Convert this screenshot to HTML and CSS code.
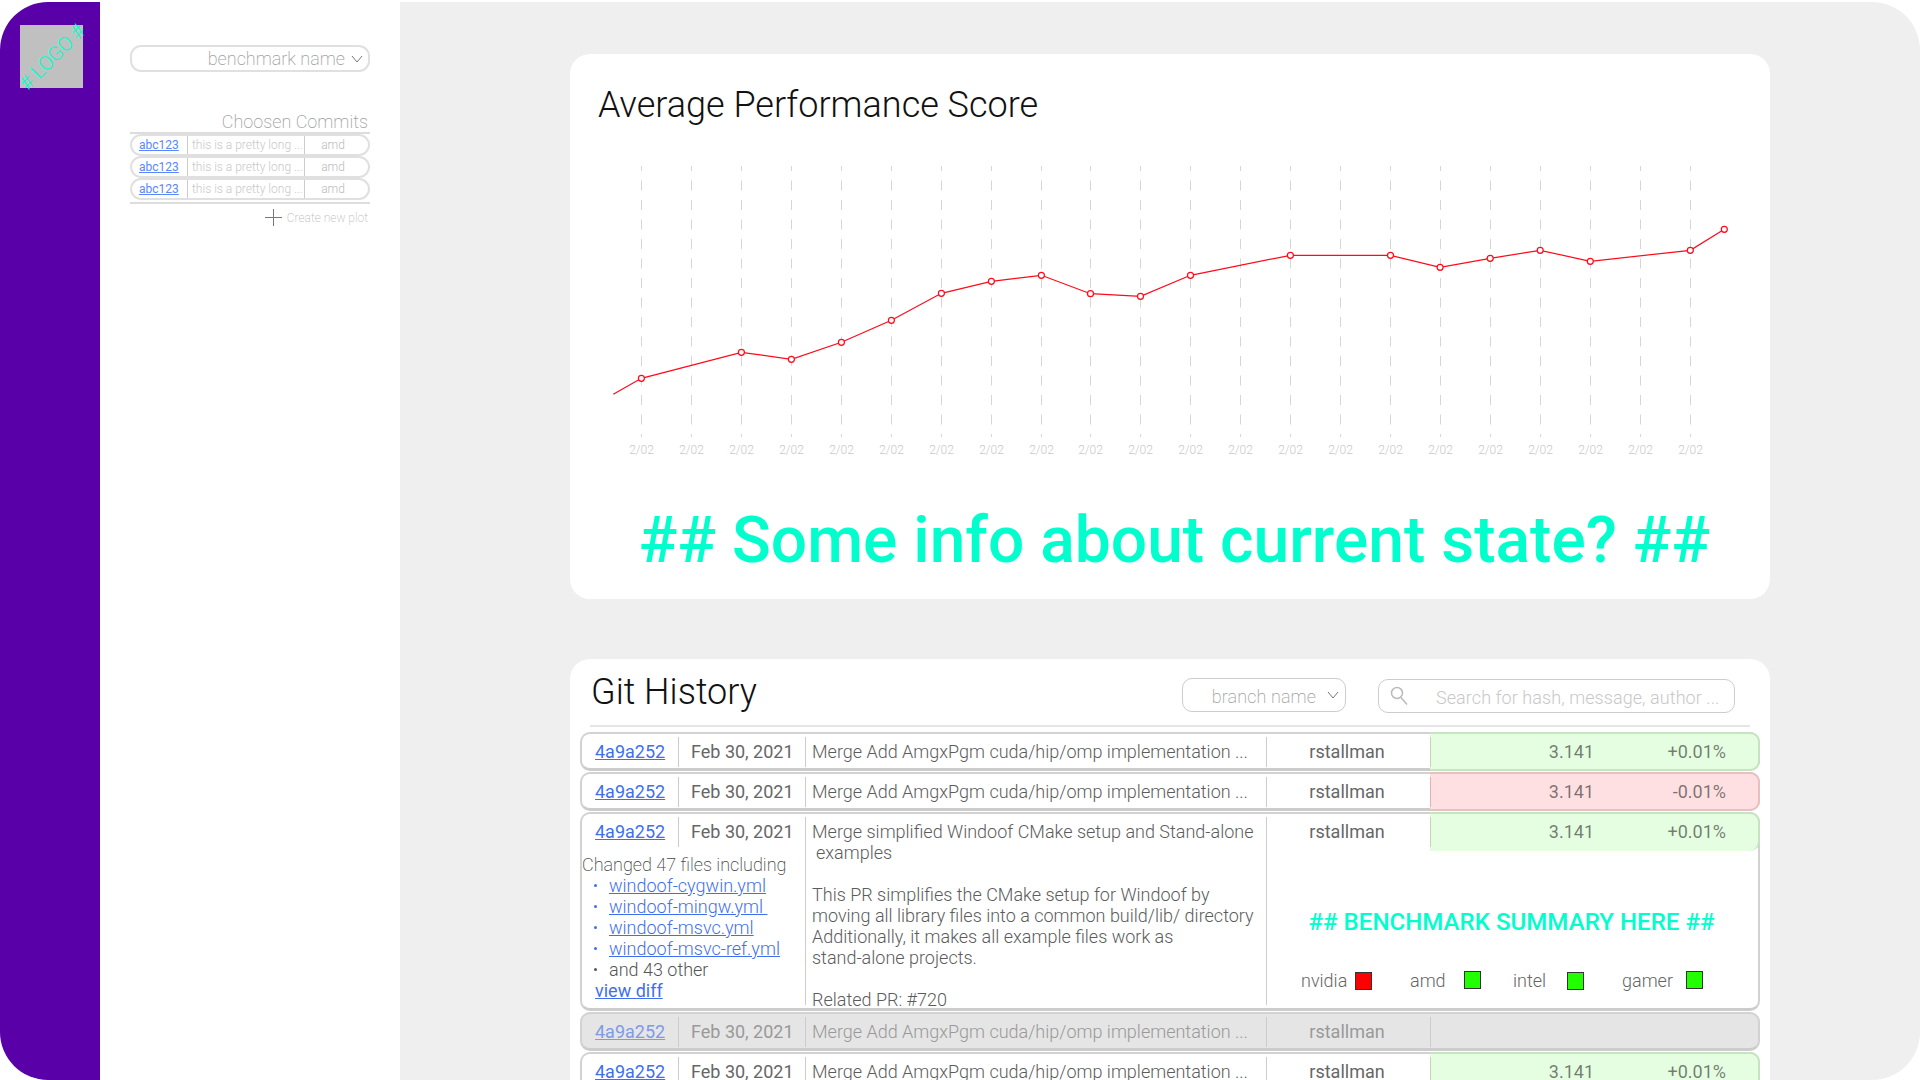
FILE: index.html
```html
<!DOCTYPE html>
<html lang="en">
<head>
<meta charset="utf-8">
<title>Benchmarks</title>
<link rel="stylesheet" href="styles.css">
</head>
<body>
<div class="app">
  <nav class="rail">
    <div class="logo"><span class="logo-text"># LOGO #</span></div>
  </nav>
  <aside class="panel">
    <div class="select select-bench">
      <span>benchmark name</span>
      <svg class="chev" width="12" height="8" viewBox="0 0 12 8"><path d="M1 1l5 6 5-6"/></svg>
    </div>
    <div class="chosen-title">Choosen Commits</div>
    <div class="chosen-list">
      <div class="chosen"><a href="#" class="chosen-hash">abc123</a><span class="chosen-msg">this is a pretty long ...</span><span class="chosen-tag">amd</span></div>
      <div class="chosen"><a href="#" class="chosen-hash">abc123</a><span class="chosen-msg">this is a pretty long ...</span><span class="chosen-tag">amd</span></div>
      <div class="chosen"><a href="#" class="chosen-hash">abc123</a><span class="chosen-msg">this is a pretty long ...</span><span class="chosen-tag">amd</span></div>
    </div>
    <div class="new-plot">
      <svg class="plus" width="17" height="17" viewBox="0 0 17 17"><path d="M8.5 0v17M0 8.5h17"/></svg>
      <span>Create new plot</span>
    </div>
  </aside>
  <main class="main">
    <section class="card card-chart">
      <h2 class="card-title chart-title">Average Performance Score</h2>
      <svg class="chart" width="1200" height="320" viewBox="0 0 1200 320">
        <path class="grid" d="M71.5 16V287M121.5 16V287M171.5 16V287M221.5 16V287M271.5 16V287M321.5 16V287M371.5 16V287M421.5 16V287M471.5 16V287M520.5 16V287M570.5 16V287M620.5 16V287M670.5 16V287M720.5 16V287M770.5 16V287M820.5 16V287M870.5 16V287M920.5 16V287M970.5 16V287M1020.5 16V287M1070.5 16V287M1120.5 16V287"/>
        <polyline class="line" points="43.3,244.3 71.4,228.3 171.4,202.3 221.4,209.3 271.4,192.3 321.4,170.3 371.4,143.3 421.4,131.3 471.4,125.3 520.5,143.7 570.5,146.3 620.5,125.3 720.4,105.3 820.5,105.3 870.1,117.3 920.2,108.3 970.2,100.3 1020.3,111.3 1120.3,100.3 1154.3,79.3"/>
        <g class="dots">
          <circle cx="71.4" cy="228.3" r="3"/><circle cx="171.4" cy="202.3" r="3"/><circle cx="221.4" cy="209.3" r="3"/><circle cx="271.4" cy="192.3" r="3"/><circle cx="321.4" cy="170.3" r="3"/><circle cx="371.4" cy="143.3" r="3"/><circle cx="421.4" cy="131.3" r="3"/><circle cx="471.4" cy="125.3" r="3"/><circle cx="520.5" cy="143.7" r="3"/><circle cx="570.5" cy="146.3" r="3"/><circle cx="620.5" cy="125.3" r="3"/><circle cx="720.4" cy="105.3" r="3"/><circle cx="820.5" cy="105.3" r="3"/><circle cx="870.1" cy="117.3" r="3"/><circle cx="920.2" cy="108.3" r="3"/><circle cx="970.2" cy="100.3" r="3"/><circle cx="1020.3" cy="111.3" r="3"/><circle cx="1120.3" cy="100.3" r="3"/><circle cx="1154.3" cy="79.3" r="3"/>
        </g>
        <g class="ticks">
          <text x="71.5" y="304">2/02</text><text x="121.5" y="304">2/02</text><text x="171.5" y="304">2/02</text><text x="221.5" y="304">2/02</text><text x="271.5" y="304">2/02</text><text x="321.5" y="304">2/02</text><text x="371.5" y="304">2/02</text><text x="421.5" y="304">2/02</text><text x="471.5" y="304">2/02</text><text x="520.5" y="304">2/02</text><text x="570.5" y="304">2/02</text><text x="620.5" y="304">2/02</text><text x="670.5" y="304">2/02</text><text x="720.5" y="304">2/02</text><text x="770.5" y="304">2/02</text><text x="820.5" y="304">2/02</text><text x="870.5" y="304">2/02</text><text x="920.5" y="304">2/02</text><text x="970.5" y="304">2/02</text><text x="1020.5" y="304">2/02</text><text x="1070.5" y="304">2/02</text><text x="1120.5" y="304">2/02</text>
        </g>
      </svg>
      <p class="state-note">## Some info about current state? ##</p>
    </section>

    <section class="card card-git">
      <header class="git-head">
        <h2 class="card-title git-title">Git History</h2>
        <div class="select select-branch">
          <span>branch name</span>
          <svg class="chev" width="12" height="8" viewBox="0 0 12 8"><path d="M1 1l5 6 5-6"/></svg>
        </div>
        <div class="search">
          <svg class="search-icon" width="18" height="19" viewBox="0 0 18 19"><circle cx="7" cy="7" r="5.5"/><path d="M11 11.5l6 7"/></svg>
          <span>Search for hash, message, author ...</span>
        </div>
      </header>
      <div class="rows">
        <div class="row row-up">
          <div class="cell cell-hash"><a href="#">4a9a252</a></div>
          <div class="cell cell-date">Feb 30, 2021</div>
          <div class="cell cell-msg">Merge Add AmgxPgm cuda/hip/omp implementation ...</div>
          <div class="cell cell-author">rstallman</div>
          <div class="result"><div class="cell score"><span>3.141</span><span>+0.01%</span></div></div>
        </div>
        <div class="row row-down">
          <div class="cell cell-hash"><a href="#">4a9a252</a></div>
          <div class="cell cell-date">Feb 30, 2021</div>
          <div class="cell cell-msg">Merge Add AmgxPgm cuda/hip/omp implementation ...</div>
          <div class="cell cell-author">rstallman</div>
          <div class="result"><div class="cell score"><span>3.141</span><span>-0.01%</span></div></div>
        </div>
        <div class="row row-up row-open">
          <div class="cell cell-hash"><a href="#">4a9a252</a></div>
          <div class="cell cell-date">Feb 30, 2021</div>
          <div class="cell cell-msg msg-full">
            <p>Merge simplified Windoof CMake setup and Stand-alone<br><span class="indent">examples</span></p>
            <p>This PR simplifies the CMake setup for Windoof by<br>moving all library files into a common build/lib/ directory<br>Additionally, it makes all example files work as<br>stand-alone projects.</p>
            <p>Related PR: #720</p>
          </div>
          <div class="files">
            <div class="files-head">Changed 47 files including</div>
            <ul class="file-list">
              <li><a href="#">windoof-cygwin.yml</a></li>
              <li><a href="#">windoof-mingw.yml&nbsp;</a></li>
              <li><a href="#">windoof-msvc.yml</a></li>
              <li><a href="#">windoof-msvc-ref.yml</a></li>
              <li class="file-more">and 43 other</li>
            </ul>
            <a href="#" class="view-diff">view diff</a>
          </div>
          <div class="open-right">
            <div class="cell cell-author">rstallman</div>
            <div class="result"><div class="cell score"><span>3.141</span><span>+0.01%</span></div></div>
            <div class="summary">
              <div class="summary-title">## BENCHMARK SUMMARY HERE ##</div>
              <div class="legend">
                <div class="legend-item">nvidia<i class="swatch swatch-bad"></i></div>
                <div class="legend-item">amd<i class="swatch swatch-ok"></i></div>
                <div class="legend-item">intel<i class="swatch swatch-ok"></i></div>
                <div class="legend-item">gamer<i class="swatch swatch-ok"></i></div>
              </div>
            </div>
          </div>
        </div>
        <div class="row row-off">
          <div class="cell cell-hash"><a href="#">4a9a252</a></div>
          <div class="cell cell-date">Feb 30, 2021</div>
          <div class="cell cell-msg">Merge Add AmgxPgm cuda/hip/omp implementation ...</div>
          <div class="cell cell-author">rstallman</div>
          <div class="result"><div class="cell score"></div></div>
        </div>
        <div class="row row-up">
          <div class="cell cell-hash"><a href="#">4a9a252</a></div>
          <div class="cell cell-date">Feb 30, 2021</div>
          <div class="cell cell-msg">Merge Add AmgxPgm cuda/hip/omp implementation ...</div>
          <div class="cell cell-author">rstallman</div>
          <div class="result"><div class="cell score"><span>3.141</span><span>+0.01%</span></div></div>
        </div>
      </div>
    </section>
  </main>
</div>
</body>
</html>
```
FILE: styles.css
```css
* { box-sizing: border-box; }
html, body { margin: 0; height: 100%; background: #fff; overflow: hidden; }
body { font-family: Roboto, "Noto Sans", sans-serif; color: #666; font-size: 18px; }
a { color: #3f6fee; }
p, ul, h2 { margin: 0; padding: 0; }

.app {
  display: flex;
  height: 1078px;
  margin-top: 2px;
  border-radius: 48px;
  overflow: hidden;
}

/* left rail */
.rail { flex: 0 0 100px; background: #5900a8; padding: 23px 0 0 20px; }
.logo {
  width: 63px;
  height: 63px;
  background: #c0c0c0;
  display: flex;
  align-items: center;
  justify-content: center;
}
.logo-text {
  flex: none;
  color: #00ffcc;
  font-weight: 300;
  font-size: 20px;
  white-space: nowrap;
  transform: rotate(-45deg);
}

/* side panel */
.panel { flex: 0 0 300px; background: #fff; padding: 43px 30px 0; }
.select {
  display: flex;
  align-items: center;
  justify-content: flex-end;
  border: 2px solid #e0e0e0;
  color: #a0a0a0;
  font-weight: 200;
  font-size: 18px;
}
.select-bench { height: 27px; border-radius: 11px; padding-right: 5px; gap: 6px; }
.chev { fill: none; stroke: #777; stroke-width: 1; }
.chosen-title {
  margin-top: 39px;
  height: 21px;
  line-height: 21px;
  text-align: right;
  padding-right: 2px;
  color: #a0a0a0;
  font-weight: 200;
  font-size: 18px;
}
.chosen-list {
  border-top: 2px solid #ddd;
  border-bottom: 2px solid #ddd;
  padding: 0 0 2px;
}
.chosen {
  display: grid;
  grid-template-columns: 55px 117px 1fr;
  align-items: center;
  height: 22px;
  border: 2px solid #e0e0e0;
  border-radius: 11px;
  font-size: 12px;
  font-weight: 300;
  color: #bbb;
}
.chosen-hash { padding-left: 7px; font-weight: 400; color: #5a86ff; }
.chosen-msg, .chosen-tag {
  border-left: 1px solid #ccc;
  height: 18px;
  line-height: 18px;
  white-space: nowrap;
}
.chosen-msg { padding-left: 4px; color: #c8c8c8; }
.chosen-tag { text-align: center; padding-right: 7px; }
.new-plot {
  display: flex;
  align-items: center;
  justify-content: flex-end;
  gap: 5px;
  margin-top: 5px;
  padding-right: 2px;
  color: #bbb;
  font-size: 12px;
  font-weight: 200;
}
.plus { fill: none; stroke: #777; stroke-width: 1; }

/* main */
.main {
  flex: 1;
  background: #efefef;
  padding: 52px 150px 0 170px;
  display: flex;
  flex-direction: column;
  gap: 60px;
}
.card { background: #fff; border-radius: 20px; flex: none; }
.card-title { font-weight: 300; font-size: 36px; color: #111; line-height: 42px; }
.card-chart { height: 545px; padding-top: 30px; }
.chart-title { padding-left: 28px; }
.chart { display: block; margin-top: 24px; }
.grid { fill: none; stroke: #d6d6d6; stroke-width: 1; stroke-dasharray: 10 9.5; stroke-dashoffset: 5; }
.line { fill: none; stroke: #ff0a1a; stroke-width: 1.2; }
.dots circle { fill: #fff; stroke: #ff0a1a; stroke-width: 1.2; }
.ticks text { fill: #c8c8c8; font-size: 12px; font-weight: 300; text-anchor: middle; }
.state-note {
  margin-top: 33px;
  padding-left: 9px;
  text-align: center;
  color: #00ffcc;
  font-size: 64.1px;
  font-weight: 500;
  line-height: 76px;
  white-space: nowrap;
}

/* git card */
.card-git { height: 500px; padding: 0 10px; }
.git-head {
  display: flex;
  align-items: flex-start;
  height: 68px;
  margin: 0 10px;
  padding: 0 0 0 1px;
  border-bottom: 2px solid #e5e5e5;
}
.git-title { margin-top: 12px; flex: 1; }
.select-branch {
  width: 164px;
  height: 34px;
  margin: 19px -1px 0 1px;
  padding: 2px 6px 0 0;
  border-width: 1px;
  border-color: #ccc;
  border-radius: 10px;
  gap: 11px;
  letter-spacing: 0.1px;
}
.select-branch .chev { margin-top: -2px; }
.search {
  display: flex;
  align-items: center;
  width: 357px;
  height: 34px;
  margin: 20px 15px 0 33px;
  padding: 2px 0 0 11px;
  border: 1px solid #ccc;
  border-radius: 10px;
  color: #c8c8c8;
  font-weight: 300;
  gap: 28px;
  letter-spacing: 0.07px;
}
.search-icon { fill: none; stroke: #bbb; stroke-width: 1.5; margin-top: -3px; }

.rows { display: flex; flex-direction: column; gap: 1px; margin-top: 5px; }
.row {
  display: grid;
  grid-template-columns: 96px 127px 461px 164px 1fr;
  grid-template-rows: 34px;
  height: 39px;
  border: 2px solid #d2d2d2;
  border-bottom: 3px solid #ccc;
  border-radius: 10px;
  background: #fff;
}
.cell {
  display: flex;
  align-items: center;
  height: 30px;
  margin-top: 3px;
  padding-bottom: 2px;
  border-left: 1px solid #ccc;
  white-space: nowrap;
}
.cell-hash { padding-left: 13px; border-left: 0; }
.cell-date { padding-left: 12px; }
.cell-msg { padding-left: 6px; font-weight: 300; color: #5c5c5c; }
.cell-author { justify-content: center; padding-right: 3px; }
.result {
  margin: -2px -2px -3px 0;
  border: 2px solid transparent;
  border-left: 0;
  border-radius: 0 10px 10px 0;
}
.score {
  display: grid;
  grid-template-columns: 163px 132px;
  justify-items: end;
  align-content: center;
  color: rgba(0, 0, 0, 0.52);
}
.row-up .result { background: #e5fde0; border-color: #c6e4bf; }
.row-up .score { border-left-color: #bcd8b4; }
.row-down .result { background: #ffe0e2; border-color: #e6c0c3; }
.row-down .score { border-left-color: #dcb4b8; }

.row-off { background: #e5e5e5; }
.row-off .cell { color: #999; }
.row-off a { color: #7f9ae6; }
.row-off .result { background: transparent; }

/* expanded row */
.row-open {
  height: 199px;
  grid-template-rows: 34px 1fr;
}
.msg-full {
  grid-column: 3;
  grid-row: 1 / 3;
  display: block;
  height: 188px;
  padding-top: 4px;
  line-height: 21px;
}
.msg-full p { margin-bottom: 21px; }
.indent { padding-left: 4px; }
.files {
  grid-column: 1 / 3;
  grid-row: 2;
  padding-top: 6px;
  font-weight: 300;
  line-height: 21px;
  white-space: nowrap;
}
.files-head { font-weight: 200; color: #444; }
.file-list { list-style: none; }
.file-list li { display: flex; align-items: center; padding-left: 12px; gap: 12px; color: #3f6fee; }
.file-list li::before { content: ""; width: 3px; height: 3px; border-radius: 50%; background: currentColor; }
.file-list .file-more { color: #555; }
.view-diff { padding-left: 13px; font-weight: 400; }
.open-right {
  grid-column: 4 / 6;
  grid-row: 1 / 3;
  display: grid;
  grid-template-columns: 164px 1fr;
  grid-template-rows: 34px 1fr;
  background: linear-gradient(#ccc, #ccc) left 3px / 1px 188px no-repeat;
}
.row-up.row-open .result { border-bottom: 0; margin-bottom: 3px; height: 39px; }
.summary { grid-column: 1 / 3; text-align: center; font-weight: 300; }
.summary-title {
  margin-top: 59px;
  color: #00ffcc;
  font-size: 24.1px;
  font-weight: 500;
  line-height: 30px;
  padding-right: 1px;
}
.legend {
  display: grid;
  grid-template-columns: 109px 103px 109px 81px;
  margin-top: 33px;
  padding-left: 35px;
  line-height: 21px;
  color: #666;
}
.legend-item { display: flex; align-items: center; justify-content: space-between; width: 71px; }
.legend-item:nth-child(even) { margin-top: -1px; }
.legend-item:last-child { width: 81px; }
.swatch { display: block; width: 17px; height: 18px; border: 1px solid #333; }
.swatch-bad { background: #ff0000; }
.swatch-ok { background: #22ff00; }
```
